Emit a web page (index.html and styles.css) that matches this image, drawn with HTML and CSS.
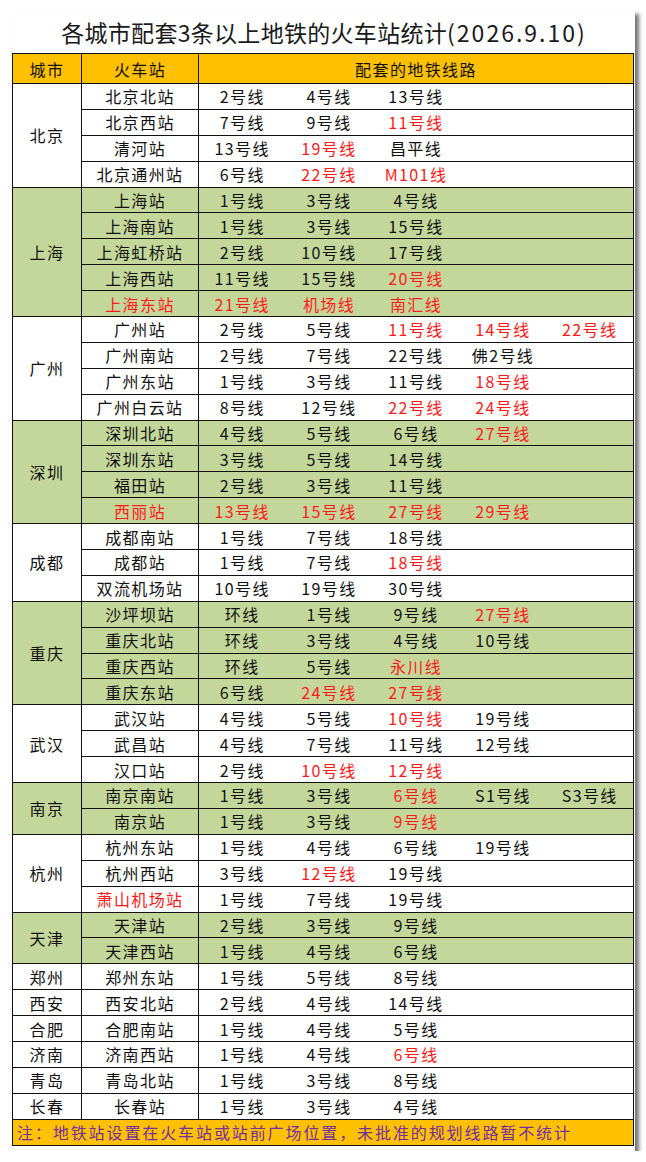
FILE: index.html
```html
<!DOCTYPE html>
<html lang="zh">
<head>
<meta charset="utf-8">
<link rel="stylesheet" href="styles.css">
</head>
<body>
<div class="card">
  <h1 class="title">各城市配套3条以上地铁的火车站统计<span class="date">(2026.9.10)</span></h1>
  <table class="tbl">
    <colgroup>
      <col class="c-city"><col class="c-sta"><col class="c-l"><col class="c-l"><col class="c-l"><col class="c-l"><col class="c-l">
    </colgroup>
    <thead>
      <tr class="head"><th>城市</th><th>火车站</th><th colspan="5">配套的地铁线路</th></tr>
    </thead>
    <tbody>
      <tr><td class="city" rowspan="4">北京</td><td class="sta">北京北站</td><td class="ln">2号线</td><td class="ln">4号线</td><td class="ln">13号线</td><td class="ln"></td><td class="ln"></td></tr>
      <tr><td class="sta">北京西站</td><td class="ln">7号线</td><td class="ln">9号线</td><td class="ln r">11号线</td><td class="ln"></td><td class="ln"></td></tr>
      <tr><td class="sta">清河站</td><td class="ln">13号线</td><td class="ln r">19号线</td><td class="ln">昌平线</td><td class="ln"></td><td class="ln"></td></tr>
      <tr><td class="sta">北京通州站</td><td class="ln">6号线</td><td class="ln r">22号线</td><td class="ln r">M101线</td><td class="ln"></td><td class="ln"></td></tr>

      <tr class="g"><td class="city" rowspan="5">上海</td><td class="sta">上海站</td><td class="ln">1号线</td><td class="ln">3号线</td><td class="ln">4号线</td><td class="ln"></td><td class="ln"></td></tr>
      <tr class="g"><td class="sta">上海南站</td><td class="ln">1号线</td><td class="ln">3号线</td><td class="ln">15号线</td><td class="ln"></td><td class="ln"></td></tr>
      <tr class="g"><td class="sta">上海虹桥站</td><td class="ln">2号线</td><td class="ln">10号线</td><td class="ln">17号线</td><td class="ln"></td><td class="ln"></td></tr>
      <tr class="g"><td class="sta">上海西站</td><td class="ln">11号线</td><td class="ln">15号线</td><td class="ln r">20号线</td><td class="ln"></td><td class="ln"></td></tr>
      <tr class="g"><td class="sta r">上海东站</td><td class="ln r">21号线</td><td class="ln r">机场线</td><td class="ln r">南汇线</td><td class="ln"></td><td class="ln"></td></tr>

      <tr><td class="city" rowspan="4">广州</td><td class="sta">广州站</td><td class="ln">2号线</td><td class="ln">5号线</td><td class="ln r">11号线</td><td class="ln r">14号线</td><td class="ln r">22号线</td></tr>
      <tr><td class="sta">广州南站</td><td class="ln">2号线</td><td class="ln">7号线</td><td class="ln">22号线</td><td class="ln">佛2号线</td><td class="ln"></td></tr>
      <tr><td class="sta">广州东站</td><td class="ln">1号线</td><td class="ln">3号线</td><td class="ln">11号线</td><td class="ln r">18号线</td><td class="ln"></td></tr>
      <tr><td class="sta">广州白云站</td><td class="ln">8号线</td><td class="ln">12号线</td><td class="ln r">22号线</td><td class="ln r">24号线</td><td class="ln"></td></tr>

      <tr class="g"><td class="city" rowspan="4">深圳</td><td class="sta">深圳北站</td><td class="ln">4号线</td><td class="ln">5号线</td><td class="ln">6号线</td><td class="ln r">27号线</td><td class="ln"></td></tr>
      <tr class="g"><td class="sta">深圳东站</td><td class="ln">3号线</td><td class="ln">5号线</td><td class="ln">14号线</td><td class="ln"></td><td class="ln"></td></tr>
      <tr class="g"><td class="sta">福田站</td><td class="ln">2号线</td><td class="ln">3号线</td><td class="ln">11号线</td><td class="ln"></td><td class="ln"></td></tr>
      <tr class="g"><td class="sta r">西丽站</td><td class="ln r">13号线</td><td class="ln r">15号线</td><td class="ln r">27号线</td><td class="ln r">29号线</td><td class="ln"></td></tr>

      <tr><td class="city" rowspan="3">成都</td><td class="sta">成都南站</td><td class="ln">1号线</td><td class="ln">7号线</td><td class="ln">18号线</td><td class="ln"></td><td class="ln"></td></tr>
      <tr><td class="sta">成都站</td><td class="ln">1号线</td><td class="ln">7号线</td><td class="ln r">18号线</td><td class="ln"></td><td class="ln"></td></tr>
      <tr><td class="sta">双流机场站</td><td class="ln">10号线</td><td class="ln">19号线</td><td class="ln">30号线</td><td class="ln"></td><td class="ln"></td></tr>

      <tr class="g"><td class="city" rowspan="4">重庆</td><td class="sta">沙坪坝站</td><td class="ln">环线</td><td class="ln">1号线</td><td class="ln">9号线</td><td class="ln r">27号线</td><td class="ln"></td></tr>
      <tr class="g"><td class="sta">重庆北站</td><td class="ln">环线</td><td class="ln">3号线</td><td class="ln">4号线</td><td class="ln">10号线</td><td class="ln"></td></tr>
      <tr class="g"><td class="sta">重庆西站</td><td class="ln">环线</td><td class="ln">5号线</td><td class="ln r">永川线</td><td class="ln"></td><td class="ln"></td></tr>
      <tr class="g"><td class="sta">重庆东站</td><td class="ln">6号线</td><td class="ln r">24号线</td><td class="ln r">27号线</td><td class="ln"></td><td class="ln"></td></tr>

      <tr><td class="city" rowspan="3">武汉</td><td class="sta">武汉站</td><td class="ln">4号线</td><td class="ln">5号线</td><td class="ln r">10号线</td><td class="ln">19号线</td><td class="ln"></td></tr>
      <tr><td class="sta">武昌站</td><td class="ln">4号线</td><td class="ln">7号线</td><td class="ln">11号线</td><td class="ln">12号线</td><td class="ln"></td></tr>
      <tr><td class="sta">汉口站</td><td class="ln">2号线</td><td class="ln r">10号线</td><td class="ln r">12号线</td><td class="ln"></td><td class="ln"></td></tr>

      <tr class="g"><td class="city" rowspan="2">南京</td><td class="sta">南京南站</td><td class="ln">1号线</td><td class="ln">3号线</td><td class="ln r">6号线</td><td class="ln">S1号线</td><td class="ln">S3号线</td></tr>
      <tr class="g"><td class="sta">南京站</td><td class="ln">1号线</td><td class="ln">3号线</td><td class="ln r">9号线</td><td class="ln"></td><td class="ln"></td></tr>

      <tr><td class="city" rowspan="3">杭州</td><td class="sta">杭州东站</td><td class="ln">1号线</td><td class="ln">4号线</td><td class="ln">6号线</td><td class="ln">19号线</td><td class="ln"></td></tr>
      <tr><td class="sta">杭州西站</td><td class="ln">3号线</td><td class="ln r">12号线</td><td class="ln">19号线</td><td class="ln"></td><td class="ln"></td></tr>
      <tr><td class="sta r">萧山机场站</td><td class="ln">1号线</td><td class="ln">7号线</td><td class="ln">19号线</td><td class="ln"></td><td class="ln"></td></tr>

      <tr class="g"><td class="city" rowspan="2">天津</td><td class="sta">天津站</td><td class="ln">2号线</td><td class="ln">3号线</td><td class="ln">9号线</td><td class="ln"></td><td class="ln"></td></tr>
      <tr class="g"><td class="sta">天津西站</td><td class="ln">1号线</td><td class="ln">4号线</td><td class="ln">6号线</td><td class="ln"></td><td class="ln"></td></tr>

      <tr><td class="city">郑州</td><td class="sta">郑州东站</td><td class="ln">1号线</td><td class="ln">5号线</td><td class="ln">8号线</td><td class="ln"></td><td class="ln"></td></tr>
      <tr><td class="city">西安</td><td class="sta">西安北站</td><td class="ln">2号线</td><td class="ln">4号线</td><td class="ln">14号线</td><td class="ln"></td><td class="ln"></td></tr>
      <tr><td class="city">合肥</td><td class="sta">合肥南站</td><td class="ln">1号线</td><td class="ln">4号线</td><td class="ln">5号线</td><td class="ln"></td><td class="ln"></td></tr>
      <tr><td class="city">济南</td><td class="sta">济南西站</td><td class="ln">1号线</td><td class="ln">4号线</td><td class="ln r">6号线</td><td class="ln"></td><td class="ln"></td></tr>
      <tr><td class="city">青岛</td><td class="sta">青岛北站</td><td class="ln">1号线</td><td class="ln">3号线</td><td class="ln">8号线</td><td class="ln"></td><td class="ln"></td></tr>
      <tr><td class="city">长春</td><td class="sta">长春站</td><td class="ln">1号线</td><td class="ln">3号线</td><td class="ln">4号线</td><td class="ln"></td><td class="ln"></td></tr>

      <tr class="note"><td colspan="7">注：地铁站设置在火车站或站前广场位置，未批准的规划线路暂不统计</td></tr>
    </tbody>
  </table>
</div>
</body>
</html>
```

FILE: styles.css
```css
html, body {
  margin: 0;
  padding: 0;
  background: #ffffff;
}

body {
  font-family: "Noto Sans CJK SC", "Noto Sans", sans-serif;
  color: #111;
}

.card {
  margin: 10px 0 0 9px;
  width: 626px;
  background: #fff;
  padding: 0 3px 5px 3px;
  box-sizing: border-box;
  box-shadow: 4px 4px 4px rgba(0, 0, 0, 0.55);
}

.title {
  margin: 0;
  height: 43px;
  line-height: 45px;
  font-size: 23px;
  font-weight: 400;
  text-align: center;
  letter-spacing: 0.3px;
  color: #1a1a1a;
  padding-left: 4px;
}

.date {
  letter-spacing: 2px;
}

.tbl {
  border-collapse: collapse;
  width: 621px;
  table-layout: fixed;
  font-size: 16px;
  letter-spacing: 1.4px;
  border: 1px solid #111;
}

.c-city { width: 69px; }
.c-sta { width: 117px; }
.c-l { width: 87px; }

.tbl th, .tbl td {
  padding: 0;
  text-align: center;
  white-space: nowrap;
  font-weight: 400;
  line-height: 20px;
}

.head th {
  height: 29px;
  background: #ffc000;
  border: 1px solid #111;
}

.tbl tbody tr {
  height: 25.9px;
}

.city {
  border: 1px solid #111;
}

.sta {
  border: 1px solid #111;
}

.ln {
  border-top: 1px solid #111;
  border-bottom: 1px solid #111;
}

.g td {
  background: #c4d79b;
}

.r {
  color: #ff1a1a;
}

.note td {
  height: 25px;
  background: #ffc000;
  color: #7030a0;
  text-align: left;
  padding-left: 4px;
  letter-spacing: 1.9px;
  border: 1px solid #111;
}
```
